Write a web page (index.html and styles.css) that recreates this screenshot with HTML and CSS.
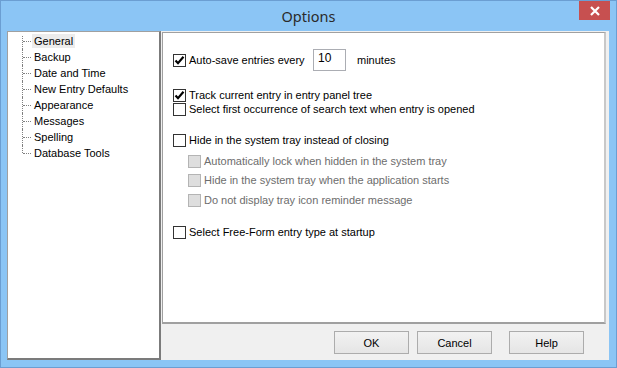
FILE: index.html
```html
<html><head>
<meta charset="UTF-8">
		<title>Options</title>
		<link rel="stylesheet" href="styles.css">
	</head>
	<body>
		<div id="window">

			<div id="titlebar">
				<div></div>
				<div class="title">Options</div>
				<div class="close">
					<svg width="12" height="10" viewBox="0 0 12 10"><path d="M2 1 L10 9 M10 1 L2 9" stroke="#fff" stroke-width="2.2"/></svg>
				</div>
			</div>

			<div id="frame-body">

				<ul id="tree">
					<li><span class="sel">General</span></li>
					<li><span>Backup</span></li>
					<li><span>Date and Time</span></li>
					<li><span>New Entry Defaults</span></li>
					<li><span>Appearance</span></li>
					<li><span>Messages</span></li>
					<li><span>Spelling</span></li>
					<li><span>Database Tools</span></li>
				</ul>

				<div id="panel">
					<div id="page">

						<div class="row r-autosave">
							<span class="cb checked"><svg width="11" height="11" viewBox="0 0 11 11"><path d="M1.5 5.5 L4 8.2 L9.5 1.8" fill="none" stroke="#000" stroke-width="2.2"/></svg></span>
							<span class="label autosave">Auto-save entries every</span>
							<span class="textbox">10</span>
							<span class="minutes">minutes</span>
						</div>

						<div class="row r-track">
							<span class="cb checked"><svg width="11" height="11" viewBox="0 0 11 11"><path d="M1.5 5.5 L4 8.2 L9.5 1.8" fill="none" stroke="#000" stroke-width="2.2"/></svg></span>
							<span class="label">Track current entry in entry panel tree</span>
						</div>

						<div class="row r-first">
							<span class="cb"></span>
							<span class="label">Select first occurrence of search text when entry is opened</span>
						</div>

						<div class="row r-hide">
							<span class="cb"></span>
							<span class="label">Hide in the system tray instead of closing</span>
						</div>

						<div class="row sub r-lock disabled">
							<span class="cb"></span>
							<span class="label">Automatically lock when hidden in the system tray</span>
						</div>

						<div class="row sub r-start disabled">
							<span class="cb"></span>
							<span class="label">Hide in the system tray when the application starts</span>
						</div>

						<div class="row sub r-remind disabled">
							<span class="cb"></span>
							<span class="label">Do not display tray icon reminder message</span>
						</div>

						<div class="row r-freeform">
							<span class="cb"></span>
							<span class="label">Select Free-Form entry type at startup</span>
						</div>

					</div>

					<div id="buttons">
						<button class="ok">OK</button>
						<button class="cancel">Cancel</button>
						<button>Help</button>
					</div>
				</div>

			</div>
		</div>
	</body></html>
```

FILE: styles.css
```css
body
{
	margin: 0;
	font-family: "Liberation Sans", Arial, sans-serif;
	font-size: 11px;
	color: #000;
}

#window
{
	width: 615px;
	height: 366px;
	border: 1px solid #6b9ed2;
	background: #8bc5f5;
	display: flex;
	flex-direction: column;
}

#titlebar
{
	height: 30px;
	display: grid;
	grid-template-columns: 1fr auto 1fr;
}

#titlebar .title
{
	font-family: "Noto Sans", "Open Sans", sans-serif;
	font-size: 14.5px;
	color: #2a2a2a;
	line-height: 30px;
}

#titlebar .close
{
	justify-self: end;
	width: 31px;
	height: 19px;
	margin-right: 6px;
	background: #c75050;
	display: flex;
	align-items: center;
	justify-content: center;
}

#frame-body
{
	flex: 1;
	display: flex;
	padding: 0 7px 7px 6px;
}

/* tree */

#tree
{
	width: 154px;
	margin: 0;
	padding: 1px 0 0 14px;
	list-style: none;
	background: #fff;
	border-top: 1px solid #a0a0a0;
	border-left: 1px solid #a0a0a0;
	border-right: 2px solid #7b7b7b;
	border-bottom: 2px solid #7b7b7b;
	box-sizing: border-box;
}

#tree li
{
	position: relative;
	height: 16px;
	line-height: 16px;
	padding-left: 10px;
}

#tree li::before
{
	content: "";
	position: absolute;
	left: 0;
	top: 0;
	bottom: 0;
	border-left: 1px dotted #808080;
}

#tree li:first-child::before { top: 3px; }
#tree li:last-child::before  { bottom: 8px; }

#tree li::after
{
	content: "";
	position: absolute;
	left: 1px;
	top: 8px;
	width: 8px;
	border-top: 1px dotted #808080;
}

#tree li span
{
	padding: 1px 2px;
}

#tree li span.sel
{
	background: #ececec;
}

/* right panel */

#panel
{
	flex: 1;
	background: #f0f0f0;
	display: flex;
	flex-direction: column;
}

#page
{
	height: 289px;
	margin: 1px 3px 0 1px;
	padding-left: 10px;
	background: #fff;
	border: 1px solid #a0a0a0;
	border-right-width: 2px;
	border-bottom-width: 2px;
	border-right-color: #c8c8c8;
	border-bottom-color: #a0a0a0;
	overflow: hidden;
}

.row
{
	display: flex;
	align-items: center;
	height: 14px;
	white-space: nowrap;
}

.row.sub { padding-left: 15px; }

.r-autosave { height: 22px; margin-top: 16px; }
.r-track    { margin-top: 17px; }
.r-first    { margin-top: 0; }
.r-hide     { margin-top: 17px; }
.r-lock     { margin-top: 7px; }
.r-start    { margin-top: 5px; }
.r-remind   { margin-top: 6px; }
.r-freeform { margin-top: 18px; }

.cb
{
	width: 11px;
	height: 11px;
	border: 1px solid #333;
	background: #fff;
	margin-right: 3px;
	display: flex;
	align-items: center;
	justify-content: center;
	flex: none;
}

.disabled .cb
{
	border-color: #b4b4b4;
	background: #dedede;
}

.disabled .label
{
	color: #6d6d6d;
}

.label.autosave
{
	width: 124px;
}

.textbox
{
	width: 27px;
	height: 20px;
	line-height: 17px;
	padding-left: 4px;
	border: 1px solid #abadb3;
	font-size: 12px;
	box-sizing: content-box;
}

.minutes
{
	margin-left: 11px;
}

#buttons
{
	display: flex;
	justify-content: flex-end;
	padding: 7px 25px 0 0;
}

#buttons button
{
	width: 75px;
	height: 23px;
	font-family: "Liberation Sans", Arial, sans-serif;
	font-size: 11px;
	color: #000;
	background: linear-gradient(#f2f2f2, #e5e5e5);
	border: 1px solid #acacac;
	border-radius: 0;
	padding: 0;
}

#buttons button.ok     { margin-right: 8px; }
#buttons button.cancel { margin-right: 17px; }
```
